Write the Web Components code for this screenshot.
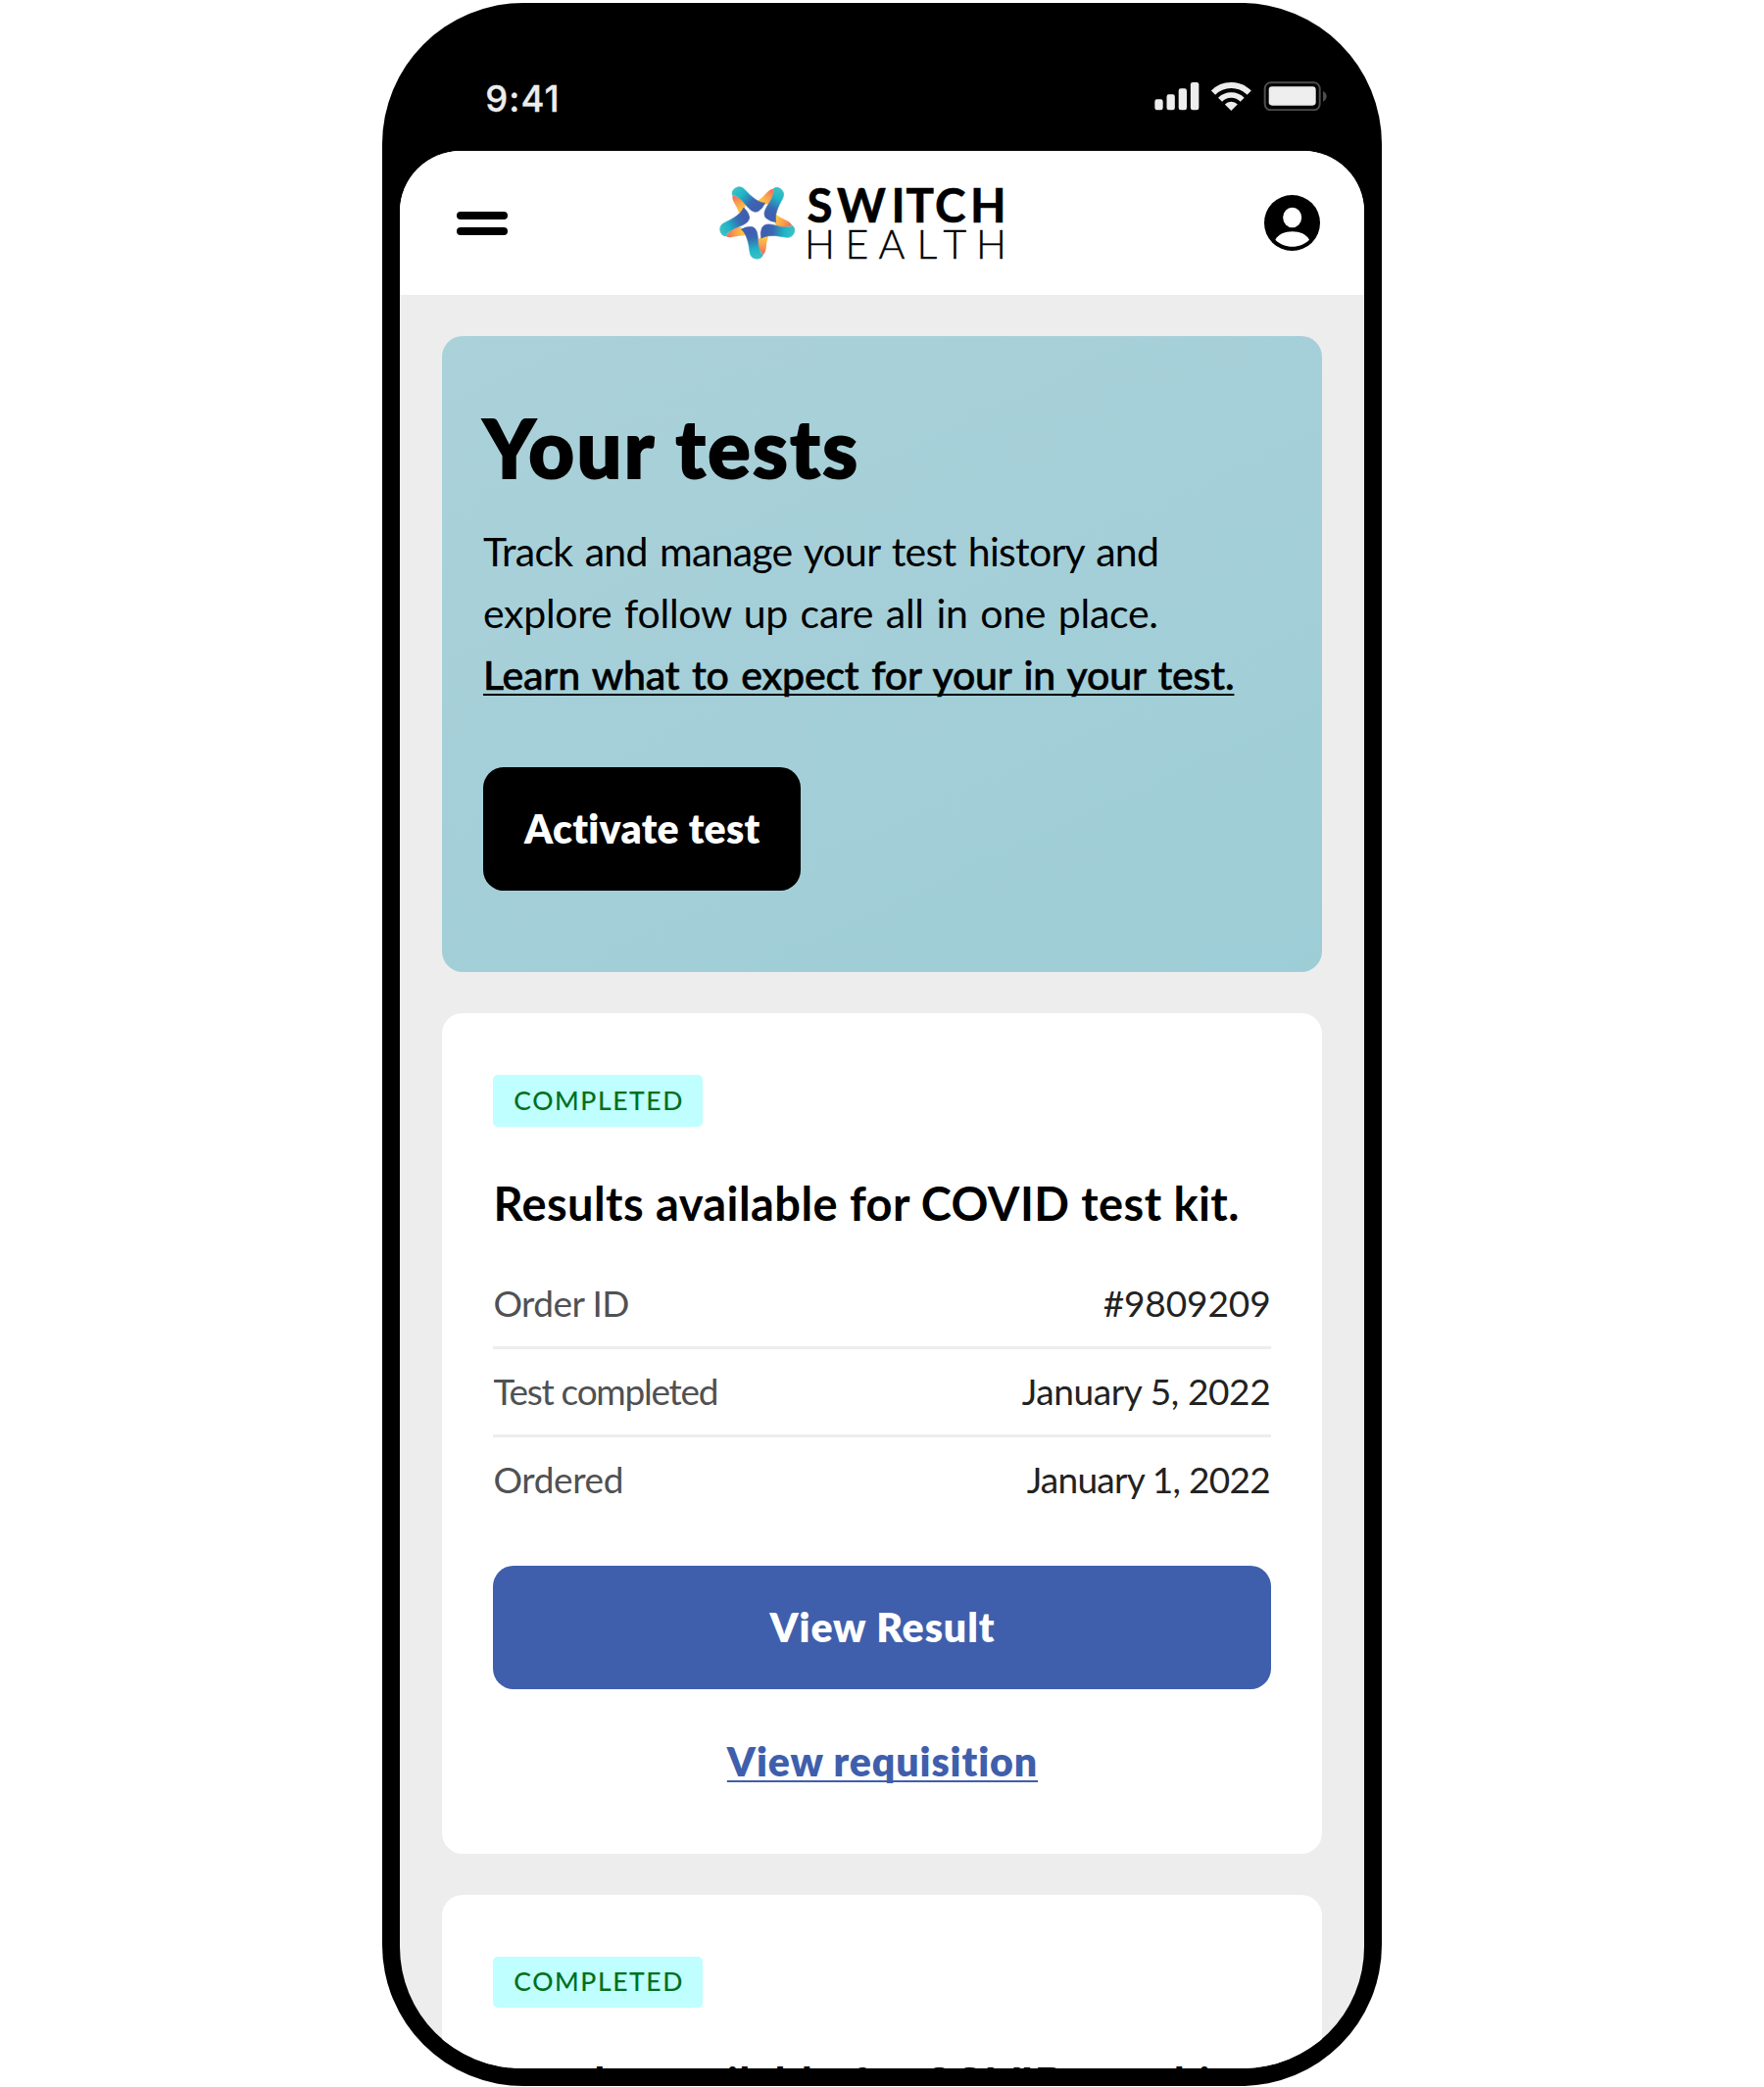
<!DOCTYPE html>
<html lang="en">
<head>
<meta charset="utf-8">
<title>Switch Health – Your tests</title>
<style>
  html, body { margin: 0; background: #fff; }
  body { height: 2130px; overflow: hidden; font-family: Lato, "Open Sans", sans-serif; color: #000; display: flex; justify-content: center; align-items: flex-start; }
</style>
</head>
<body>
<phone-frame>
  <status-bar slot="status"></status-bar>
  <app-header></app-header>
  <app-feed>
    <hero-card></hero-card>
    <result-card></result-card>
    <result-card></result-card>
  </app-feed>
</phone-frame>

<script>
const define = (name, html, Base = HTMLElement) => {
  const t = document.createElement('template');
  t.innerHTML = html;
  customElements.define(name, class extends Base {
    constructor() {
      super();
      this.attachShadow({ mode: 'open' }).appendChild(t.content.cloneNode(true));
    }
  });
};

define('phone-frame', `
<style>
  :host { display: flex; flex-direction: column; box-sizing: border-box; width: 1020px; height: 2126.7px; margin-top: 2.6px; padding: 0 18.2px 17.8px; background: #000; border-radius: 144px; overflow: hidden; }
  .screen { flex: 1; min-height: 0; display: flex; flex-direction: column; background: #ededed; border-radius: 62px 62px 124px 124px; overflow: hidden; }
</style>
<slot name="status"></slot>
<div class="screen"><slot></slot></div>`);

define('status-bar', `
<style>
  :host { display: flex; justify-content: space-between; align-items: flex-start; height: 151.7px; box-sizing: border-box; padding: 76px 37.3px 0 87px; flex: none; color: #ededed; }
  fit-text { font: 500 36.500px/45px Inter, sans-serif; -webkit-text-stroke: .3px #ededed; }
  svg { display: block; width: 176.7px; height: 30.7px; margin-top: 4.1px; }
</style>
<fit-text fit="75.500">9:41</fit-text>
<svg viewBox="55 38 530 92" fill="#ededed">
  <rect x="56" y="93" width="25" height="33" rx="7"/>
  <rect x="92.500" y="78" width="25" height="48" rx="7"/>
  <rect x="129" y="60" width="25" height="66" rx="7"/>
  <rect x="165.500" y="41" width="25.500" height="85" rx="7"/>
  <g fill="none" stroke="#ededed">
    <path stroke-width="18" d="M235 73A77.800 77.800 0 0 1 345 73"/>
    <path stroke-width="17" d="M256 94A48.100 48.100 0 0 1 324 94"/>
  </g>
  <path d="M290 128L270.500 108.500A27.600 27.600 0 0 1 309.500 108.500Z"/>
  <rect x="393" y="42" width="168" height="84" rx="18" fill="none" stroke="#4d4d4d" stroke-width="6"/>
  <rect x="405" y="54" width="144" height="58" rx="10"/>
  <path fill="#4d4d4d" d="M571 68C578 71 582 77 582 84S578 97 571 100Z"/>
</svg>`);

define('app-header', `
<style>
  :host { display: flex; justify-content: space-between; align-items: center; height: 146.7px; box-sizing: border-box; padding: 0 45px 0 57.5px; background: #fff; flex: none; }
  .menu { display: flex; flex-direction: column; gap: 8.300px; width: 52.500px; margin-top: 1px; }
  .menu i { height: 7.600px; border-radius: 4px; background: #000; }
  svg { display: block; }
</style>
<div class="menu"><i></i><i></i></div>
<switch-logo></switch-logo>
<svg width="57" height="57" viewBox="0 0 171 171">
  <circle cx="85.500" cy="85.500" r="85.500"/>
  <ellipse cx="86" cy="69" rx="28.500" ry="31" fill="#fff"/>
  <path fill="#fff" d="M34 137C44 120 62 112 86 112S128 120 138 137C124 151 106 158 86 158S48 151 34 137Z"/>
</svg>`);

define('switch-logo', `
<style>
  :host { display: block; width: 310px; height: 95px; margin-right: 49px; }
  svg { display: block; width: 310px; height: 95px; }
  .s { font: 700 47.500px Lato, sans-serif; stroke: #000; stroke-width: .6px; }
  .h { font: 300 41px Lato, sans-serif; stroke: #000; stroke-width: .4px; }
</style>
<svg viewBox="0 0 310 95">
  <defs>
    <linearGradient id="b" gradientUnits="userSpaceOnUse" x1="-22" y1="28" x2="-6" y2="119">
      <stop offset=".12" stop-color="#3f5fb0"/><stop offset=".32" stop-color="#3a6ab2"/><stop offset=".7" stop-color="#1eb5c6"/><stop offset="1" stop-color="#3bbfc5"/>
    </linearGradient>
    <linearGradient id="o" gradientUnits="userSpaceOnUse" x1="22" y1="53" x2="14" y2="109">
      <stop offset="0" stop-color="#ffc741"/><stop offset=".5" stop-color="#f99b52"/><stop offset="1" stop-color="#f0645c"/>
    </linearGradient>
    <path id="op" fill="url(#o)" d="M2 60Q18 44 34 50Q28 68 27 87Q26 101 17 109L0 84Z"/>
    <path id="bp" fill="url(#b)" stroke="url(#b)" stroke-width="2" stroke-linejoin="round" d="M-50 29Q-36 20 -20 21C-7 22 -1 33 1 53C2 71 1 93 17 110Q12 121 0 121C-14 121 -22 114 -24 99C-28 66 -34 44 -50 29Z"/>
  </defs>
  <g transform="translate(47.900 44.600) scale(.327)">
    <use href="#op"/><use href="#op" transform="rotate(72)"/><use href="#op" transform="rotate(144)"/><use href="#op" transform="rotate(216)"/><use href="#op" transform="rotate(288)"/>
    <use href="#bp"/><use href="#bp" transform="rotate(72)"/><use href="#bp" transform="rotate(144)"/><use href="#bp" transform="rotate(216)"/><use href="#bp" transform="rotate(288)"/>
  </g>
  <text class="s" y="46.600" x="98.500 129 184.500 199.500 229 265">SWITCH</text>
  <text class="h" y="84" x="96 137.500 171.500 210.500 237.500 271">HEALTH</text>
</svg>`);

define('app-feed', `
<style>:host { display: flex; flex-direction: column; gap: 42px; padding: 42px 42.800px 0; }</style>
<slot></slot>`);

define('hero-card', `
<style>
  :host { display: flex; flex-direction: column; align-items: flex-start; box-sizing: border-box; height: 649.500px; padding: 72.500px 42px 0; border-radius: 21px; background: linear-gradient(155deg, #abd1da, #9dcdd6); flex: none; }
  .title { font-size: 81px; font-weight: 900; line-height: 84px; -webkit-text-stroke: 2px #000; }
  .copy { display: flex; flex-direction: column; align-items: flex-start; margin: 31.500px 0 63px; font-size: 41px; line-height: 63px; }
  .copy fit-text { word-spacing: .06em; }
  .link { font-weight: 500; -webkit-text-stroke: .6px #000; }
  app-button { width: 324.500px; --bg: #000; }
</style>
<fit-text class="title" fit="382">Your tests</fit-text>
<div class="copy">
  <fit-text fit="690">Track and manage your test history and</fit-text>
  <fit-text fit="689">explore follow up care all in one place.</fit-text>
  <fit-text class="link" fit="766.600" underline>Learn what to expect for your in your test.</fit-text>
</div>
<app-button><fit-text fit="241">Activate test</fit-text></app-button>`);

define('app-button', `
<style>
  :host { display: flex; align-items: center; justify-content: center; box-sizing: border-box; height: 126px; border-radius: 21px; background: var(--bg); color: #fff; font-weight: 800; font-size: 41px; line-height: 63px; flex: none; }
</style>
<slot></slot>`);

define('status-badge', `
<style>
  :host { display: flex; align-items: center; justify-content: center; align-self: flex-start; box-sizing: border-box; width: 214px; height: 52.500px; padding-bottom: 2px; border-radius: 5px; background: #bfffff; color: #00701e; font-size: 26.500px; font-weight: 500; line-height: 32px; flex: none; }
</style>
<fit-text fit="172"><slot></slot></fit-text>`);

define('detail-row', `
<style>
  :host { display: flex; align-items: center; justify-content: space-between; box-sizing: border-box; height: 90px; padding-bottom: 1px; border-bottom: 3px solid var(--rule, #ededed); font-size: 37px; line-height: 48px; color: #222; }
  ::slotted([slot=label]) { color: #505153; }
</style>
<slot name="label"></slot><slot></slot>`);

define('result-card', `
<style>
  :host { display: flex; flex-direction: column; box-sizing: border-box; height: 857.500px; padding: 63px 52.400px 0; border-radius: 21px; background: #fff; flex: none; }
  .heading { margin: 48px 0 29px; font-size: 47px; font-weight: 700; line-height: 60px; align-self: flex-start; }
  .last { --rule: transparent; }
  app-button { --bg: #3f5fac; margin-top: 41px; }
  .link { align-self: center; margin-top: 42px; font-size: 41px; font-weight: 800; line-height: 63px; color: #3f5fac; }
</style>
<status-badge>COMPLETED</status-badge>
<fit-text class="heading" fit="761">Results available for COVID test kit.</fit-text>
<detail-row><fit-text slot="label" fit="139">Order ID</fit-text><fit-text fit="171">#9809209</fit-text></detail-row>
<detail-row><fit-text slot="label" fit="230">Test completed</fit-text><fit-text fit="254">January 5, 2022</fit-text></detail-row>
<detail-row class="last"><fit-text slot="label" fit="133">Ordered</fit-text><fit-text fit="249">January 1, 2022</fit-text></detail-row>
<app-button><fit-text fit="229">View Result</fit-text></app-button>
<fit-text class="link" fit="317" underline>View requisition</fit-text>`);

/* One line of text, tracked so that its advance width equals the "fit" attribute. */
class FitText extends HTMLElement {
  constructor() {
    super();
    this.attachShadow({ mode: 'open' }).innerHTML = `
<style>
  :host { display: block; white-space: nowrap; }
  span { display: inline-block; }
  :host([underline]) span { text-decoration: underline; text-decoration-thickness: 2.200px; text-underline-offset: 4px; text-decoration-skip-ink: none; }
</style><span><slot></slot></span>`;
  }
  connectedCallback() {
    const span = this.shadowRoot.querySelector('span');
    const slot = this.shadowRoot.querySelector('slot');
    const text = slot.assignedNodes({ flatten: true }).map(n => n.textContent).join('').trim();
    const gap = (parseFloat(this.getAttribute('fit')) - span.getBoundingClientRect().width) / (text.length - 1);
    span.style.letterSpacing = gap + 'px';
    span.style.marginRight = -gap + 'px';
  }
}
customElements.define('fit-text', FitText);
</script>
</body>
</html>
